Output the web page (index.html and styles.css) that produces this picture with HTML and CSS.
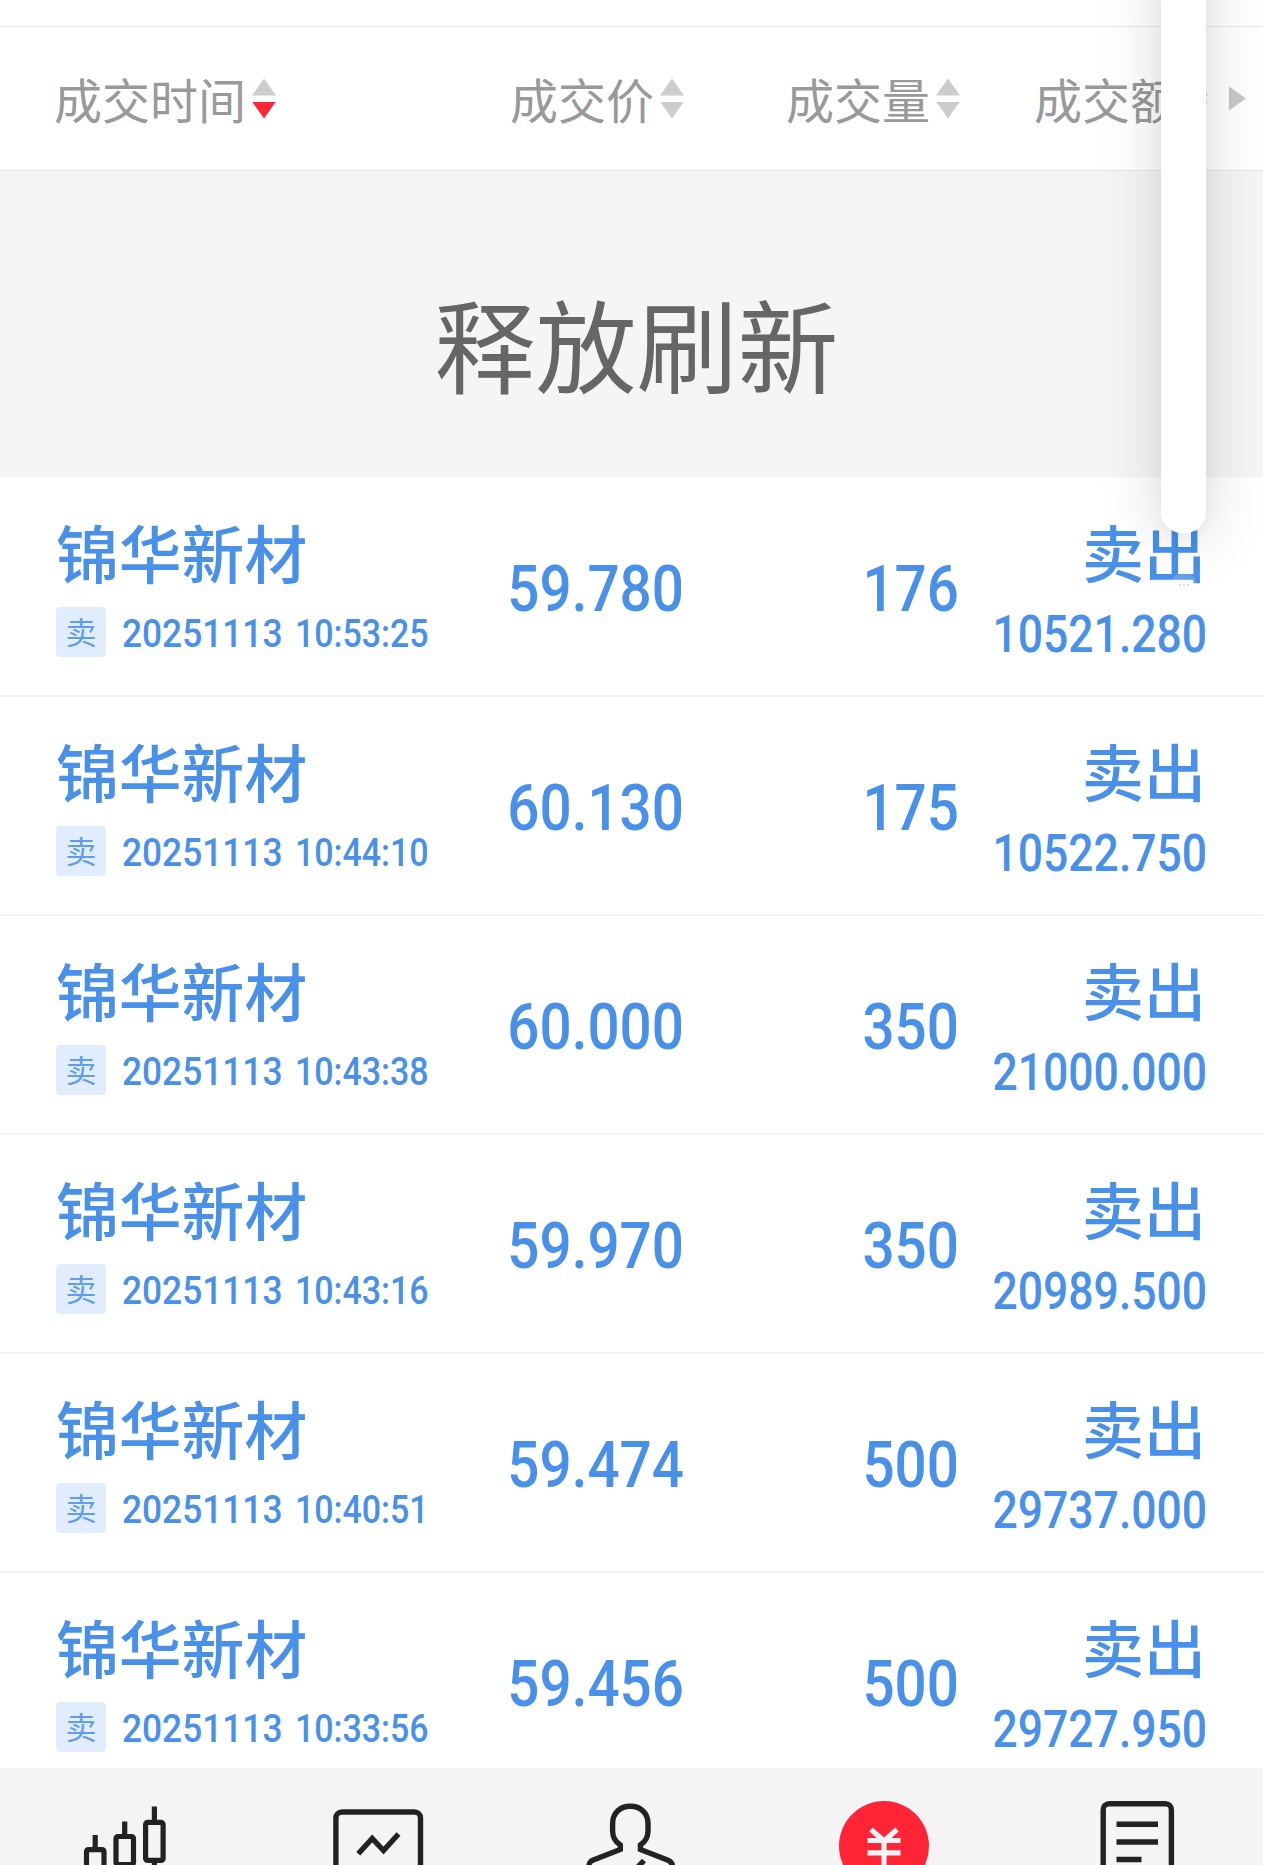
FILE: index.html
```html
<!DOCTYPE html>
<html lang="zh-CN">
<head>
    <meta charset="UTF-8">
    <meta name="viewport" content="width=device-width, initial-scale=1.0">
    <title>成交记录</title>
    <link rel="stylesheet" href="styles.css">
</head>
<body>
    <div class="top-strip"></div>
    <div class="list-header">
        <div class="head-cell head-time"><span class="label">成交时间</span><span class="sort"><i class="up"></i><i class="down active"></i></span></div>
        <div class="head-cell"><span class="label">成交价</span><span class="sort"><i class="up"></i><i class="down"></i></span></div>
        <div class="head-cell"><span class="label">成交量</span><span class="sort"><i class="up"></i><i class="down"></i></span></div>
        <div class="head-cell"><span class="label">成交额</span><span class="sort"><i class="up"></i><i class="down"></i></span></div>
        <div class="more-cols"></div>
    </div>
    <div class="pull-refresh">释放刷新</div>
    <div class="trade-list" id="tradeList"></div>
    <div class="tab-bar">
        <div class="tab">
            <svg viewBox="0 0 100 97" fill="none" stroke="#222" stroke-width="5.2">
                <path d="M19.2 67v14M48.7 53.5v14M78.4 38.5v14M78.4 95v2"/>
                <rect x="10.5" y="81.6" width="17.5" height="40" rx="2"/>
                <rect x="40" y="68.5" width="17.5" height="28" rx="2"/>
                <rect x="69.6" y="54.4" width="17.5" height="38" rx="2"/>
            </svg>
        </div>
        <div class="tab">
            <svg viewBox="0 0 100 97" fill="none" stroke="#222" stroke-width="5.4">
                <rect x="6.9" y="44" width="84.6" height="80" rx="6"/>
                <path d="M29.3 85.8 43.2 70.5 54.5 82.5 69.5 66"/>
            </svg>
        </div>
        <div class="tab">
            <svg viewBox="0 0 100 97" fill="none" stroke="#222" stroke-width="5.4">
                <path d="M7.8 99c0-4 1.2-5.5 4.5-6.9L39.3 81.5V77C34 73.5 31.6 69 31.6 63V55.5C31.6 45 39 38.3 49.3 38.3S67 45 67 55.5V63C67 69 64.6 73.5 59.4 77V81.5L86.5 92.1C90 93.5 91.5 95 91.5 99"/>
                <path d="M55 101 63 92.5"/>
            </svg>
        </div>
        <div class="tab">
            <svg viewBox="0 0 100 97" fill="none">
                <circle cx="50" cy="78" r="45" fill="#ff2436"/>
                <path stroke="#f4f4f4" stroke-width="5.2" d="M37 61.5 50 73 63 61.5M33.5 72.5H66.5M33.5 84.8H66.5M50 72V100"/>
            </svg>
        </div>
        <div class="tab">
            <svg viewBox="0 0 100 97" fill="none" stroke="#222" stroke-width="5.4">
                <rect x="16.2" y="35.7" width="68.2" height="84" rx="6"/>
                <path d="M29.5 56.2H71M29.5 74H71M29.5 91.5H54.5"/>
            </svg>
        </div>
    </div>
    <div class="side-panel"></div>
    <div class="side-more"><i></i><i></i><i></i></div>
    <script>
        const trades = [
            { date: '20251113', time: '10:53:25', price: '59.780', volume: '176', amount: '10521.280' },
            { date: '20251113', time: '10:44:10', price: '60.130', volume: '175', amount: '10522.750' },
            { date: '20251113', time: '10:43:38', price: '60.000', volume: '350', amount: '21000.000' },
            { date: '20251113', time: '10:43:16', price: '59.970', volume: '350', amount: '20989.500' },
            { date: '20251113', time: '10:40:51', price: '59.474', volume: '500', amount: '29737.000' },
            { date: '20251113', time: '10:33:56', price: '59.456', volume: '500', amount: '29727.950' }
        ];

        const tradeList = document.getElementById('tradeList');
        trades.forEach(trade => {
            const row = document.createElement('div');
            row.classList.add('trade-row');
            row.innerHTML = `
                <div class="stock">
                    <div class="name">锦华新材</div>
                    <div class="meta">
                        <span class="badge">卖</span>
                        <span class="num date">${trade.date}</span>
                        <span class="num date clock">${trade.time}</span>
                    </div>
                </div>
                <div class="num big">${trade.price}</div>
                <div class="num big">${trade.volume}</div>
                <div class="total">
                    <div class="name">卖出</div>
                    <div class="num amount">${trade.amount}</div>
                </div>
            `;
            tradeList.appendChild(row);
        });
    </script>
</body>
</html>
```

FILE: styles.css
```css
* {
    box-sizing: border-box;
}
body {
    font-family: 'Noto Sans CJK SC', sans-serif;
    margin: 0;
    height: 1865px;
    background: #fff;
    color: #4890e8;
    display: flex;
    flex-direction: column;
    overflow: hidden;
    position: relative;
}
.top-strip {
    flex: none;
    height: 27px;
    border-bottom: 1px solid #e9e9e9;
}
.list-header {
    flex: none;
    height: 144px;
    display: grid;
    grid-template-columns: 400px 230px 276px 248px 38px;
    align-items: center;
    padding: 0 17px 0 54px;
    border-bottom: 1px solid #e6e6e6;
    color: #999;
    font-size: 48px;
    line-height: 60px;
    white-space: nowrap;
}
.head-cell {
    display: flex;
    align-items: center;
    justify-content: flex-end;
    gap: 6px;
}
.head-time {
    justify-content: flex-start;
}
.label {
    padding-bottom: 2px;
}
.sort {
    display: flex;
    flex-direction: column;
    gap: 6px;
}
.sort i {
    width: 24px;
    height: 17px;
    background: #ccc;
}
.sort .up {
    clip-path: polygon(50% 0, 100% 100%, 0 100%);
}
.sort .down {
    clip-path: polygon(0 0, 100% 0, 50% 100%);
}
.sort .active {
    background: #ff2436;
}
.more-cols {
    justify-self: end;
    width: 17px;
    height: 24px;
    background: #c8c8c8;
    clip-path: polygon(0 0, 100% 50%, 0 100%);
}
.pull-refresh {
    flex: none;
    height: 306px;
    padding: 96px 0 0 10px;
    background: #f5f5f5;
    color: #666;
    font-size: 101px;
    line-height: 150px;
    text-align: center;
}
.trade-list {
    flex: none;
    height: 1291px;
    overflow: hidden;
}
.trade-row {
    height: 219px;
    display: grid;
    grid-template-columns: 384px 244px 275px 247px;
    padding: 34px 57px 0 56px;
    border-bottom: 2px solid #f3f3f3;
}
.trade-row:first-child {
    height: 220px;
    padding-top: 35px;
}
.name {
    font-size: 62.8px;
    font-weight: 500;
    line-height: 78px;
    height: 78px;
    white-space: nowrap;
}
.meta {
    display: flex;
    align-items: center;
    margin-top: 14px;
}
.badge {
    flex: none;
    width: 50px;
    height: 50px;
    margin-right: 16px;
    border-radius: 4px;
    background: #e1edfc;
    color: #5e9eec;
    font-size: 31px;
    line-height: 48px;
    text-align: center;
}
.num {
    font-family: Roboto, sans-serif;
    font-weight: 500;
    white-space: nowrap;
    transform: scaleX(0.885);
    transform-origin: right center;
}
.date {
    font-size: 39px;
    line-height: 50px;
    padding-top: 5px;
    transform: scaleX(0.905);
    transform-origin: left center;
}
.clock {
    margin-left: -4px;
    transform: scaleX(0.87);
}
.big {
    font-size: 64px;
    line-height: 74px;
    padding-top: 41px;
    text-align: right;
}
.total {
    display: flex;
    flex-direction: column;
    align-items: flex-end;
}
.total .name {
    font-size: 62px;
}
.amount {
    font-size: 51px;
    line-height: 60px;
    margin-top: 15px;
    margin-right: -1px;
    transform: scaleX(0.872);
}
.tab-bar {
    flex: none;
    height: 97px;
    display: grid;
    grid-template-columns: repeat(5, 1fr);
    background: #f4f4f4;
}
.tab {
    display: flex;
    justify-content: center;
}
.tab svg {
    width: 100px;
    height: 97px;
}
/* floating panel over the right edge of the list */
.side-panel {
    position: absolute;
    top: -60px;
    left: 1161px;
    width: 45px;
    height: 593px;
    border-radius: 21px;
    background: #fff;
    box-shadow: 0 8px 64px rgba(0, 0, 0, 0.16), 0 4px 20px rgba(0, 0, 0, 0.05);
}
.side-more {
    position: absolute;
    top: 574px;
    left: 1172px;
    width: 24px;
    height: 22px;
    border-radius: 8px;
    background: rgba(255, 255, 255, 0.15);
    display: flex;
    align-items: center;
    justify-content: center;
    gap: 2px;
}
.side-more i {
    width: 2px;
    height: 2px;
    background: #ddd;
}
```
